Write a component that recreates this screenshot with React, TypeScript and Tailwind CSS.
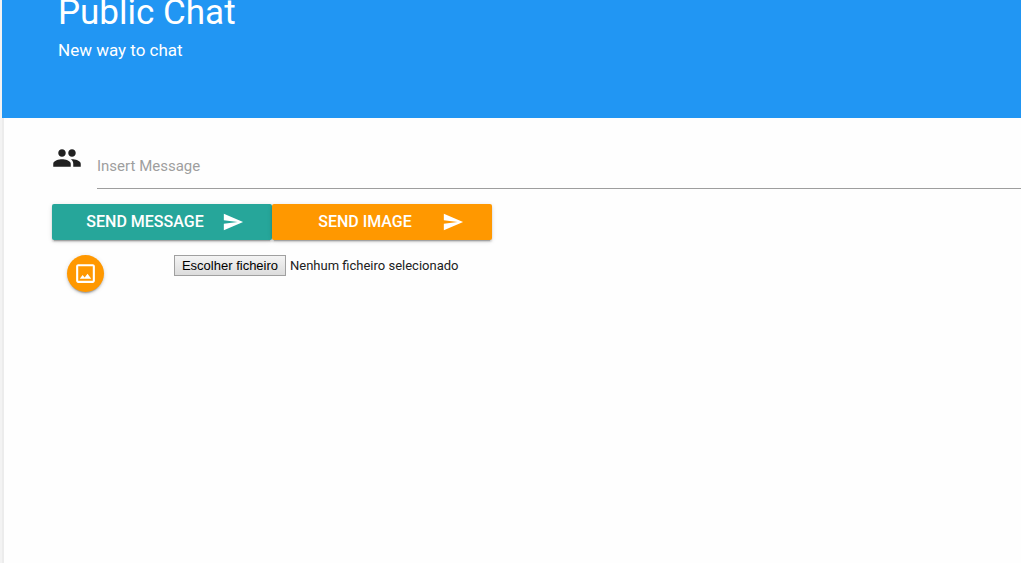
import { useRef, useState } from "react";
import { MdCropOriginal, MdPeople, MdSend } from "react-icons/md";

const raised =
  "shadow-[0_2px_2px_0_rgba(0,0,0,0.14),0_1px_5px_0_rgba(0,0,0,0.12),0_3px_1px_-2px_rgba(0,0,0,0.2)]";

function SendButton({ label, color }: { label: string; color: string }) {
  return (
    <button
      type="button"
      className={`flex h-9 w-[220px] items-center rounded-xs pr-7 pl-4 text-base font-medium text-white uppercase ${raised} ${color}`}
    >
      <span className="flex-1 text-center">{label}</span>
      <MdSend aria-hidden="true" className="size-[22px]" />
    </button>
  );
}

function FilePicker() {
  const input = useRef<HTMLInputElement>(null);
  const [name, setName] = useState("");
  return (
    <div className="flex items-center gap-1">
      <button
        type="button"
        onClick={() => input.current?.click()}
        className="h-[21px] w-28 border border-[#a0a0a0] bg-linear-to-b from-[#f4f4f4] to-[#dcdcdc] font-['Liberation_Sans',sans-serif] text-[13px] leading-4 whitespace-nowrap text-black"
      >
        Escolher ficheiro
      </button>
      <input
        ref={input}
        type="file"
        aria-label="Escolher ficheiro"
        className="hidden"
        onChange={(e) => setName(e.target.files?.[0]?.name ?? "")}
      />
      <span className="text-[13px] leading-5">{name || "Nenhum ficheiro selecionado"}</span>
    </div>
  );
}

export default function App() {
  return (
    <div className="flex min-h-screen flex-col overflow-x-hidden border-l-2 border-[#f3f3f3] bg-[#fefefe] font-[Roboto,sans-serif] text-[#212121]">
      <header className="flex flex-col bg-[#2196f3] pb-14 pl-14 text-white">
        <h1 className="-mt-[7px] text-[35px] leading-10">Public Chat</h1>
        <p className="pt-[5px] text-[17px] leading-6">New way to chat</p>
      </header>
      <main className="flex-1 border-l-2 border-[#ececec] pl-12">
        <form onSubmit={(e) => e.preventDefault()}>
          <div className="flex pt-[25px]">
            <label htmlFor="message" className="w-[45px] shrink-0">
              <MdPeople aria-hidden="true" className="size-[30px]" />
            </label>
            <input
              id="message"
              type="text"
              aria-label="Insert Message"
              placeholder="Insert Message"
              className="h-[46px] min-w-0 flex-1 border-b border-[#9e9e9e] bg-transparent text-[15px] outline-none placeholder:text-[#9e9e9e]"
            />
          </div>
          <div className="flex pt-[15px]">
            <SendButton label="Send message" color="bg-[#26a69a]" />
            <SendButton label="Send image" color="bg-[#ff9800]" />
          </div>
          <div className="flex items-start gap-[70px] pt-[15px] pl-[15px]">
            <button
              type="button"
              aria-label="Image"
              className={`flex size-[37px] items-center justify-center rounded-full bg-[#ff9800] text-white ${raised}`}
            >
              <MdCropOriginal aria-hidden="true" className="size-[25px]" />
            </button>
            <FilePicker />
          </div>
        </form>
      </main>
    </div>
  );
}
